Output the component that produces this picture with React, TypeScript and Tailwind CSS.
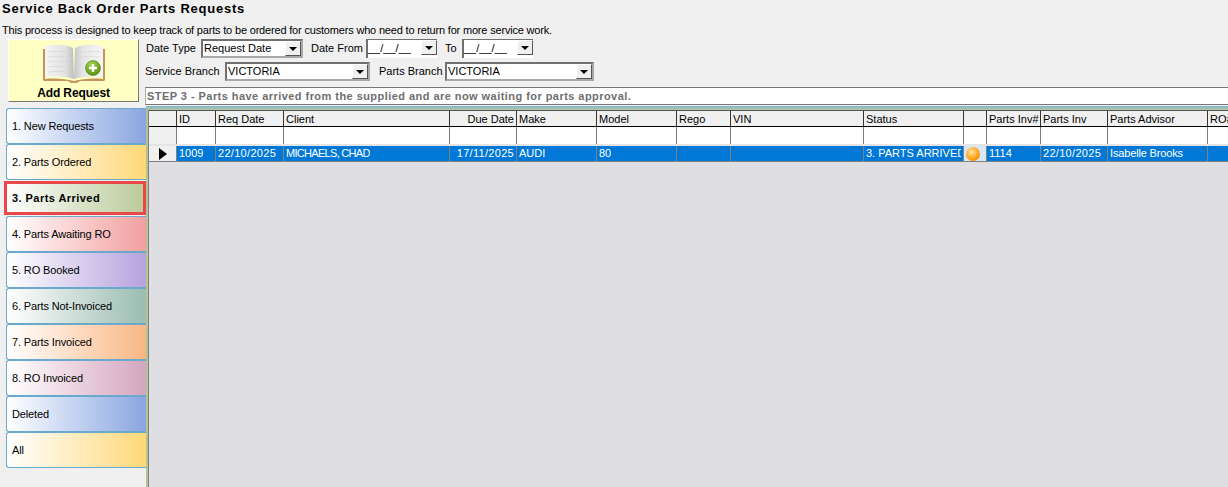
const tabs = [
  { label: '1. New Requests', color: 'to-[#8aa5e0]' },
  { label: '2. Parts Ordered', color: 'to-[#ffd875]' },
  { label: '3. Parts Arrived', color: 'to-[#bccb9c]', active: true },
  { label: '4. Parts Awaiting RO', color: 'to-[#f09fa0]' },
  { label: '5. RO Booked', color: 'to-[#b7a3dd]' },
  { label: '6. Parts Not-Invoiced', color: 'to-[#9bbdb1]' },
  { label: '7. Parts Invoiced', color: 'to-[#f8b784]' },
  { label: '8. RO Invoiced', color: 'to-[#d4a6bf]' },
  { label: 'Deleted', color: 'to-[#8aa5e0]' },
  { label: 'All', color: 'to-[#ffd875]' },
];

type Column = {
  name: string;
  width: string;
  value: string;
  track?: string;
  right?: boolean;
  orb?: boolean;
};

const columns: Column[] = [
  { name: 'ID', width: 'w-[39px]', value: '1009' },
  { name: 'Req Date', width: 'w-[68px]', value: '22/10/2025', track: 'tracking-[0.3px]' },
  { name: 'Client', width: 'w-[166px]', value: 'MICHAELS, CHAD', track: 'tracking-[-0.7px]' },
  { name: 'Due Date', width: 'w-[67px]', value: '17/11/2025', track: 'tracking-[0.3px]', right: true },
  { name: 'Make', width: 'w-[80px]', value: 'AUDI' },
  { name: 'Model', width: 'w-[80px]', value: '80' },
  { name: 'Rego', width: 'w-[54px]', value: '' },
  { name: 'VIN', width: 'w-[133px]', value: '' },
  { name: 'Status', width: 'w-[100px]', value: '3. PARTS ARRIVED' },
  { name: '', width: 'w-[23px]', value: '', orb: true },
  { name: 'Parts Inv#', width: 'w-[54px]', value: '1114' },
  { name: 'Parts Inv', width: 'w-[67px]', value: '22/10/2025', track: 'tracking-[0.3px]' },
  { name: 'Parts Advisor', width: 'w-[100px]', value: 'Isabelle Brooks', track: 'tracking-[-0.15px]' },
  { name: 'RO#', width: 'w-[40px]', value: '' },
];

const Arrow = () => (
  <span className="flex h-[15px] w-[16px] shrink-0 items-center justify-center border border-t-white border-l-white border-r-[#555] border-b-[#555] bg-[#f0f0f0]">
    <svg width="8" height="4" viewBox="0 0 8 4"><path d="M0 0h8L4 4z" fill="#000" /></svg>
  </span>
);

const Select = ({ value, width }: { value: string; width: string }) => (
  <div className={`flex h-[19px] ${width} items-center justify-between border-2 border-t-[#707070] border-l-[#707070] border-r-[#a8a8a8] border-b-[#a8a8a8] bg-white pl-[1px]`}>
    <span>{value}</span>
    <Arrow />
  </div>
);

const DateBox = () => (
  <div className="flex h-[19px] w-[71px] items-start justify-between border-l-2 border-t border-[#707070] bg-white">
    <span className="mt-[3px]">__/__/__</span>
    <Arrow />
  </div>
);

const BookIcon = () => (
  <svg width="62" height="40" viewBox="0 0 62 40">
    <defs>
      <linearGradient id="pageLeft" x1="0" y1="0" x2="1" y2="0">
        <stop offset="0" stopColor="#f4f4f4" />
        <stop offset="0.7" stopColor="#e2e2e2" />
        <stop offset="1" stopColor="#bdbdbd" />
      </linearGradient>
      <linearGradient id="pageRight" x1="0" y1="0" x2="1" y2="0">
        <stop offset="0" stopColor="#c4c4c4" />
        <stop offset="0.3" stopColor="#e6e6e6" />
        <stop offset="1" stopColor="#f6f6f6" />
      </linearGradient>
      <radialGradient id="plus" cx="0.4" cy="0.3" r="0.8">
        <stop offset="0" stopColor="#a6d64a" />
        <stop offset="1" stopColor="#4c8c0c" />
      </radialGradient>
    </defs>
    <path d="M0 5h2v30c10-1 21 0 29 2 8-2 19-3 29-2V5h2v31l-1 1H37l-3 2h-6l-3-2H1l-1-1z" fill="#c4925c" />
    <path d="M2 2c10-2 21-2 28 2l1 31c-8-3-18-3-29-2z" fill="url(#pageLeft)" />
    <path d="M60 2c-10-2-21-2-28 2l-1 31c8-3 18-3 29-2z" fill="url(#pageRight)" />
    <path d="M5 8c8-1 16-1 23 1M5 13c8-1 16-1 23 1M5 18c8-1 16-1 23 1M5 23c8-1 16-1 23 1M5 28c8-1 16-1 23 1M34 9c7-2 15-2 23-1M34 14c7-2 15-2 23-1" stroke="#d6d6d6" strokeWidth="0.7" fill="none" />
    <circle cx="50" cy="24" r="7.5" fill="url(#plus)" stroke="#3f7a0a" strokeWidth="0.5" />
    <path d="M50 20v8M46 24h8" stroke="#fff" strokeWidth="2.4" />
  </svg>
);

export default function App() {
  return (
    <div className="flex h-[487px] w-[1228px] flex-col overflow-hidden bg-[#f0f0f0] text-[11px] leading-none text-black [font-family:'Liberation_Sans',Arial,sans-serif]">
      <h1 className="ml-[2px] mt-[2px] h-[16px] text-[13px] font-bold leading-[14px] tracking-[0.75px]">
        Service Back Order Parts Requests
      </h1>
      <p className="ml-[2px] mt-[6px] h-[15px] text-[11px] leading-[12px] tracking-[-0.18px]">
        This process is designed to keep track of parts to be ordered for customers who need to return for more service work.
      </p>
      <div className="flex min-h-0 flex-1">
        <aside className="flex w-[146px] shrink-0 flex-col">
          <button className="ml-[8px] flex h-[63px] w-[131px] flex-col items-center border border-t-white border-l-white border-r-[#777] border-b-[#777] bg-[#ffffc4] pt-[4px] text-[12px] font-bold">
            <BookIcon />
            <span className="mt-[3px] tracking-[-0.12px]">Add Request</span>
          </button>
          <nav className="mt-[6px] flex flex-col pl-[6px]">
            {tabs.map((tab) =>
              tab.active ? (
                <div key={tab.label} className="-ml-[2px] my-[1px] flex h-[34px] items-center border-[3px] border-[#e8484a] bg-gradient-to-r from-white to-[#bccb9c] pl-[5px] font-bold tracking-[0.45px]">
                  {tab.label}
                </div>
              ) : (
                <div key={tab.label} className={`flex h-[36px] items-center rounded-l-[3px] border border-r-0 border-[#6aa8cc] bg-gradient-to-r from-white ${tab.color} pl-[5px] tracking-[-0.13px]`}>
                  {tab.label}
                </div>
              )
            )}
          </nav>
        </aside>

        <main className="flex min-w-0 flex-1 flex-col">
          <div className="flex h-[19px] items-center">
            <span className="w-[55px]">Date Type</span>
            <Select value="Request Date" width="w-[102px]" />
            <span className="ml-[8px] w-[55px]">Date From</span>
            <DateBox />
            <span className="ml-[8px] w-[17px]">To</span>
            <DateBox />
          </div>
          <div className="-ml-[1px] mt-[4px] flex h-[19px] items-center">
            <span className="w-[80px]">Service Branch</span>
            <Select value="VICTORIA" width="w-[145px]" />
            <span className="ml-[9px] w-[66px]">Parts Branch</span>
            <Select value="VICTORIA" width="w-[149px]" />
          </div>
          <div className="-ml-[1px] mt-[6px] flex h-[18px] items-center border-y border-y-[#777] border-l border-l-[#aaa] bg-white pl-[1px] font-bold tracking-[0.45px] text-[#6e6e6e]">
            STEP 3 - Parts have arrived from the supplied and are now waiting for parts approval.
          </div>
          <div className="mt-[1px] h-[4px] bg-gradient-to-b from-[#7fb6d2] to-[#b9c89a]" />

          <div className="flex min-h-0 flex-1 border-l-2 border-l-[#b4c294]">
            <div className="min-w-0 flex-1 border-l border-[#808080] bg-[#dfdee3]">
              <div className="flex h-[17px] border-y border-t-[#555] border-b-[#000]">
                <div className="w-[28px] shrink-0 border-r border-[#333] bg-[#f0f0f0]" />
                {columns.map((col) => (
                  <div key={col.name || 'orb'} className={`${col.width} flex shrink-0 items-center overflow-hidden whitespace-nowrap border-r border-[#333] bg-[#f0f0f0] pl-[2px] pt-[1px] ${col.right ? 'justify-end pr-[2px]' : ''}`}>
                    {col.name}
                  </div>
                ))}
              </div>
              <div className="flex h-[19px] border-b-2 border-[#e4e4e4] bg-white">
                <div className="w-[28px] shrink-0 border-r border-[#808080] bg-[#f0f0f0]" />
                {columns.map((col) => (
                  <div key={col.name || 'orb'} className={`${col.width} shrink-0 border-r border-[#808080]`} />
                ))}
              </div>
              <div className="flex h-[16px] border-b border-[#808080]">
                <div className="flex w-[28px] shrink-0 items-center justify-center border-r border-[#808080] bg-[#f0f0f0]">
                  <svg className="ml-[1px]" width="8" height="12" viewBox="0 0 8 12"><path d="M0 0l8 6-8 6z" fill="#000" /></svg>
                </div>
                {columns.map((col) => (
                  <div key={col.name || 'orb'} className={`${col.width} flex shrink-0 items-center whitespace-nowrap border-r border-[#808080] text-white ${col.orb ? 'bg-[#d8e6f5] pl-[2px]' : 'bg-[#0078d7] pl-[2px] pr-[2px]'} ${col.right ? 'justify-end' : ''} ${col.track ?? ''}`}>
                    {col.orb ? (
                      <span className="h-[14px] w-[14px] rounded-full bg-[radial-gradient(circle_at_40%_35%,#ffe3a6,#ff9d0a_60%,#d97400)]" />
                    ) : (
                      <span className="overflow-hidden">{col.value}</span>
                    )}
                  </div>
                ))}
              </div>
            </div>
          </div>
        </main>
      </div>
    </div>
  );
}
